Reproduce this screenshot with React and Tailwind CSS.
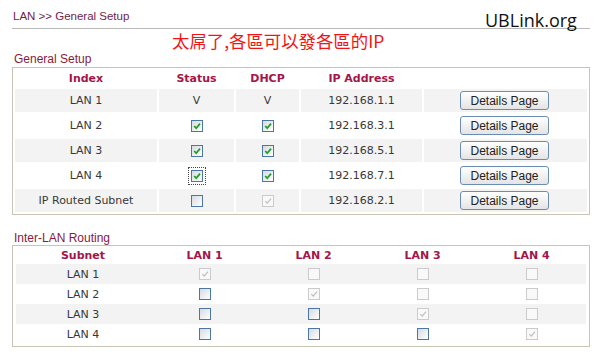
import React from 'react';

const generalRows = [
  { name: 'LAN 1', status: 'V', dhcp: 'V', ip: '192.168.1.1' },
  { name: 'LAN 2', status: 'on', dhcp: 'on', ip: '192.168.3.1' },
  { name: 'LAN 3', status: 'on', dhcp: 'on', ip: '192.168.5.1' },
  { name: 'LAN 4', status: 'focus', dhcp: 'on', ip: '192.168.7.1' },
  { name: 'IP Routed Subnet', status: 'off', dhcp: 'disabledOn', ip: '192.168.2.1' },
];

// d = disabled checked, x = disabled empty, o = enabled empty
const routing = [
  { name: 'LAN 1', cells: ['d', 'x', 'x', 'x'] },
  { name: 'LAN 2', cells: ['o', 'd', 'x', 'x'] },
  { name: 'LAN 3', cells: ['o', 'o', 'd', 'x'] },
  { name: 'LAN 4', cells: ['o', 'o', 'o', 'd'] },
];

function CheckBox({ checked, disabled, focus }) {
  return (
    <span
      className={`inline-flex h-[12px] w-[12px] items-center justify-center border ${
        disabled
          ? 'border-[#cbcbcb] bg-[#f9f9f9]'
          : 'border-[#4b76a6] bg-linear-to-br from-[#d6dbe1] to-white'
      } ${focus ? 'outline-1 outline-dotted outline-[#444] outline-offset-[2px]' : ''}`}
    >
      {checked && (
        <svg width="10" height="10" viewBox="0 0 10 10">
          <path
            d="M2.2 5 L4.2 7.2 L8 2.6"
            fill="none"
            stroke={disabled ? '#bcbcbc' : '#22a024'}
            strokeWidth={disabled ? 1.1 : 1.8}
          />
        </svg>
      )}
    </span>
  );
}

function StatusCell({ value }) {
  if (value === 'V') return <span>V</span>;
  if (value === 'on') return <CheckBox checked />;
  if (value === 'focus') return <CheckBox checked focus />;
  if (value === 'disabledOn') return <CheckBox checked disabled />;
  return <CheckBox />;
}

export default function App() {
  const body = "font-['DejaVu_Sans',Verdana,sans-serif] text-[11px] leading-[13px] text-[#383838]";
  const head = "font-['DejaVu_Sans',Verdana,sans-serif] text-[11px] leading-[13px] font-bold text-[#a3164a]";
  const section = "font-['Liberation_Sans',Arial,sans-serif] text-[12px] leading-[14px] text-[#861a40]";

  return (
    <div className="relative h-[355px] w-[599px] overflow-hidden bg-white pl-[12px] pr-[9px] pt-[10px]">
      {/* breadcrumb */}
      <div className="h-[19px] border-b border-[#b9b9b9] pl-[1px] font-['Liberation_Sans',Arial,sans-serif] text-[11.5px] leading-[13px] text-[#6f2449]">
        LAN &gt;&gt; General Setup
      </div>
      <div className="absolute left-[485px] top-[8px] font-['Open_Sans',sans-serif] text-[18px] leading-[24px] text-[#111]">
        UBLink.org
      </div>

      <div className="ml-[160px] mt-[2px] font-['Noto_Sans_CJK_TC',sans-serif] text-[17.4px] leading-[20px] text-[#f01616]">
        太屌了,各區可以發各區的IP
      </div>

      {/* General Setup */}
      <div className={`mt-[1px] pl-[2px] ${section}`}>General Setup</div>
      <div className="mt-[1px] w-[578px] border border-[#c8c5b5] px-[2px] pt-[2px] pb-[2px]">
        <div className="grid grid-cols-[142px_75px_63px_121px_1fr] gap-x-[2px] gap-y-[2px]">
          <div className={`flex h-[17px] items-center justify-center ${head}`}>Index</div>
          <div className={`flex h-[17px] items-center justify-center ${head}`}>Status</div>
          <div className={`flex h-[17px] items-center justify-center ${head}`}>DHCP</div>
          <div className={`flex h-[17px] items-center justify-center ${head}`}>IP Address</div>
          <div className="h-[17px]" />
          {generalRows.map((r, i) => {
            const bg = i % 2 === 0 ? 'bg-[#f3f3f3]' : 'bg-white';
            return (
              <React.Fragment key={r.name}>
                <div className={`flex h-[23px] items-center justify-center ${bg} ${body}`}>{r.name}</div>
                <div className={`flex h-[23px] items-center justify-center ${bg} ${body}`}>
                  <StatusCell value={r.status} />
                </div>
                <div className={`flex h-[23px] items-center justify-center ${bg} ${body}`}>
                  <StatusCell value={r.dhcp} />
                </div>
                <div className={`flex h-[23px] items-center justify-center ${bg} ${body}`}>{r.ip}</div>
                <div className={`flex h-[23px] items-center justify-center pr-[2px] ${bg}`}>
                  <button className="h-[19px] w-[89px] rounded-[3px] border border-[#6c8db3] bg-linear-to-b from-white to-[#e4e4e4] font-['Liberation_Sans',Arial,sans-serif] text-[12px] leading-none text-[#222]">
                    Details Page
                  </button>
                </div>
              </React.Fragment>
            );
          })}
        </div>
      </div>

      {/* Inter-LAN Routing */}
      <div className={`mt-[16px] pl-[2px] ${section}`}>Inter-LAN Routing</div>
      <div className="w-[578px] border border-[#c8c5b5] px-[3px] pb-[2px]">
        <div className="grid grid-cols-[134px_repeat(4,1fr)]">
          {['Subnet', 'LAN 1', 'LAN 2', 'LAN 3', 'LAN 4'].map((h) => (
            <div key={h} className={`flex h-[18px] items-center justify-center ${head}`}>{h}</div>
          ))}
        </div>
        {routing.map((r, i) => (
          <div
            key={r.name}
            className={`grid h-[20px] grid-cols-[134px_repeat(4,1fr)] ${i % 2 === 0 ? 'bg-[#f3f3f3]' : 'bg-white'}`}
          >
            <div className={`flex items-center justify-center ${body}`}>{r.name}</div>
            {r.cells.map((c, j) => (
              <div key={j} className="flex items-center justify-center">
                <CheckBox checked={c === 'd'} disabled={c !== 'o'} />
              </div>
            ))}
          </div>
        ))}
      </div>
    </div>
  );
}
